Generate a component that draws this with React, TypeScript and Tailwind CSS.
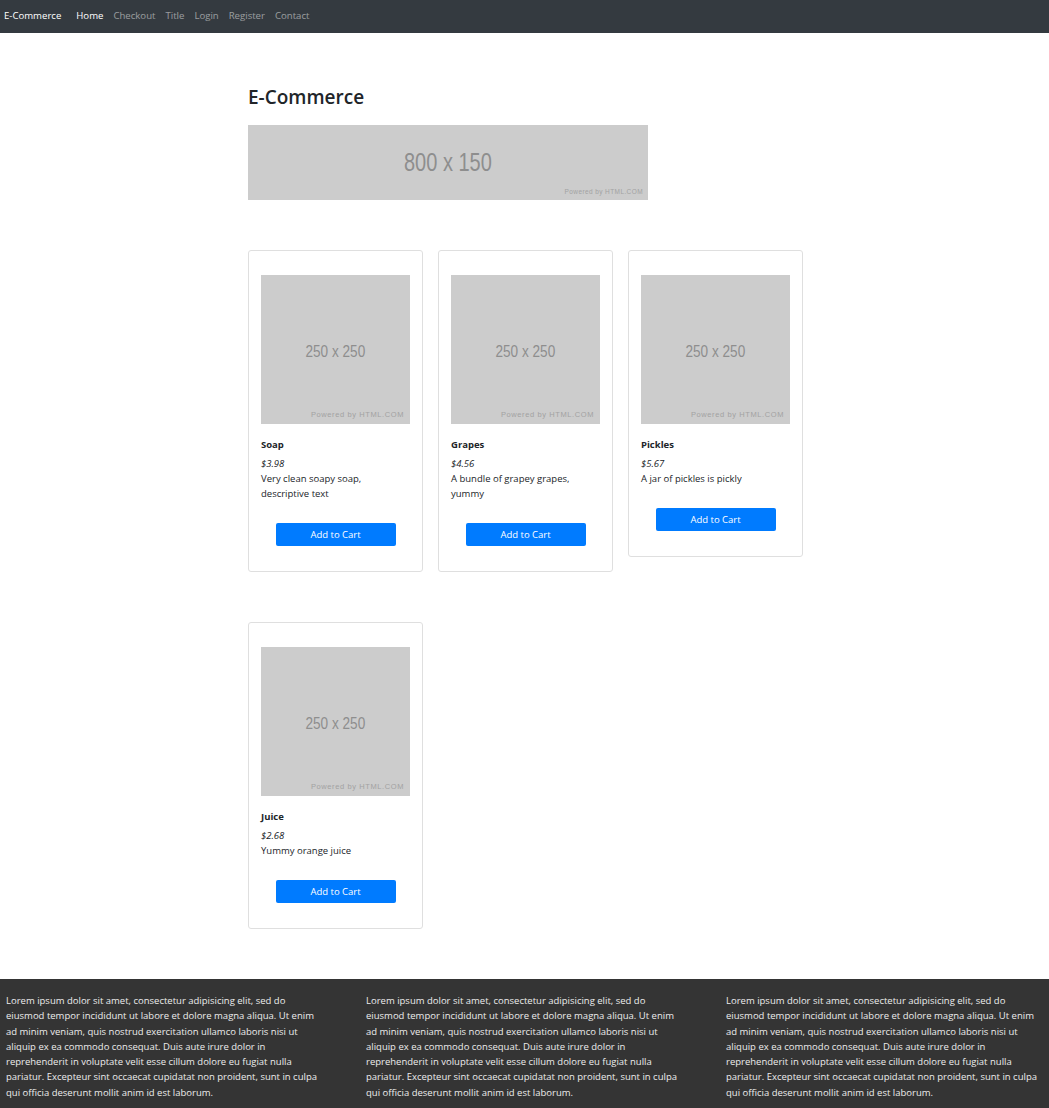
import React from "react";

const products = [
  { name: "Soap", price: "$3.98", desc: ["Very clean soapy soap,", "descriptive text"] },
  { name: "Grapes", price: "$4.56", desc: ["A bundle of grapey grapes,", "yummy"] },
  { name: "Pickles", price: "$5.67", desc: ["A jar of pickles is pickly"] },
  { name: "Juice", price: "$2.68", desc: ["Yummy orange juice"] },
];

const lorem = [
  "Lorem ipsum dolor sit amet, consectetur adipisicing elit, sed do",
  "eiusmod tempor incididunt ut labore et dolore magna aliqua. Ut enim",
  "ad minim veniam, quis nostrud exercitation ullamco laboris nisi ut",
  "aliquip ex ea commodo consequat. Duis aute irure dolor in",
  "reprehenderit in voluptate velit esse cillum dolore eu fugiat nulla",
  "pariatur. Excepteur sint occaecat cupidatat non proident, sunt in culpa",
  "qui officia deserunt mollit anim id est laborum.",
];

function Placeholder({ w, h, label, big }: { w: string; h: string; label: string; big?: boolean }) {
  return (
    <div className={`relative flex items-center justify-center bg-[#cccccc] ${w} ${h}`}>
      <span
        className={`scale-x-80 text-[#8e8e8e] font-['Liberation_Sans',Arial,sans-serif] ${
          big ? "text-[25px] leading-[25px]" : "mt-[3px] text-[17px] leading-[17px]"
        }`}
      >
        {label}
      </span>
      <span
        className={`absolute text-[#a2a2a2] font-['Liberation_Sans',Arial,sans-serif] ${
          big
            ? "bottom-[3px] right-[5px] text-[6.5px] tracking-[0.4px]"
            : "bottom-[4px] right-[6px] text-[7.5px] tracking-[0.6px]"
        }`}
      >
        Powered by HTML.COM
      </span>
    </div>
  );
}

function ProductCard({ p }: { p: (typeof products)[number] }) {
  return (
    <div className="w-[175px] self-start rounded-[3px] border border-[#dfdfdf] px-[12px] pt-[24px] pb-[25px]">
      <Placeholder w="w-[149px]" h="h-[149px]" label="250 x 250" />
      <div className="mt-[14px] text-[9.5px] font-bold leading-[14px] text-[#212529]">{p.name}</div>
      <div className="mt-[4px] text-[9.5px] italic leading-[15px] text-[#212529]">{p.price}</div>
      <div className="text-[9.5px] leading-[15px] text-[#212529]">
        {p.desc.map((l) => (
          <div key={l} className="whitespace-nowrap">{l}</div>
        ))}
      </div>
      <div className="mt-[22px] flex justify-center">
        <button className="h-[23px] w-[120px] rounded-[2px] bg-[#007bff] pt-[1px] text-[9.5px] text-white">
          Add to Cart
        </button>
      </div>
    </div>
  );
}

export default function App() {
  return (
    <main className="min-h-[1108px] bg-white font-['Open_Sans',sans-serif] flex flex-col">
      {/* navbar */}
      <nav className="flex h-[33px] items-center bg-[#343a40] px-[4px] text-[9.6px]">
        <span className="mr-[15px] text-white">E-Commerce</span>
        <div className="flex gap-[10px]">
          <span className="text-white">Home</span>
          <span className="text-white/50">Checkout</span>
          <span className="text-white/50">Title</span>
          <span className="text-white/50">Login</span>
          <span className="text-white/50">Register</span>
          <span className="text-white/50">Contact</span>
        </div>
      </nav>

      {/* main content */}
      <section className="mx-auto w-[553px] pt-[52px] pb-[50px]">
        <h1 className="text-[19px] font-semibold leading-[24px] text-[#212529]">E-Commerce</h1>
        <div className="mt-[16px]">
          <Placeholder w="w-[400px]" h="h-[75px]" label="800 x 150" big />
        </div>

        <div className="mt-[50px] grid grid-cols-[175px_175px_175px] gap-x-[15px] gap-y-[50px]">
          {products.map((p) => (
            <ProductCard key={p.name} p={p} />
          ))}
        </div>
      </section>

      {/* footer */}
      <footer className="mt-auto flex bg-[#343434] pt-[14px] pb-[12px]">
        {[0, 1, 2].map((i) => (
          <div
            key={i}
            className="w-[360px] shrink-0 px-[6px] text-[9.5px] leading-[15.3px] text-[#ececec] last:w-[329px]"
          >
            {lorem.map((l) => (
              <div key={l} className="whitespace-nowrap">{l}</div>
            ))}
          </div>
        ))}
      </footer>
    </main>
  );
}
